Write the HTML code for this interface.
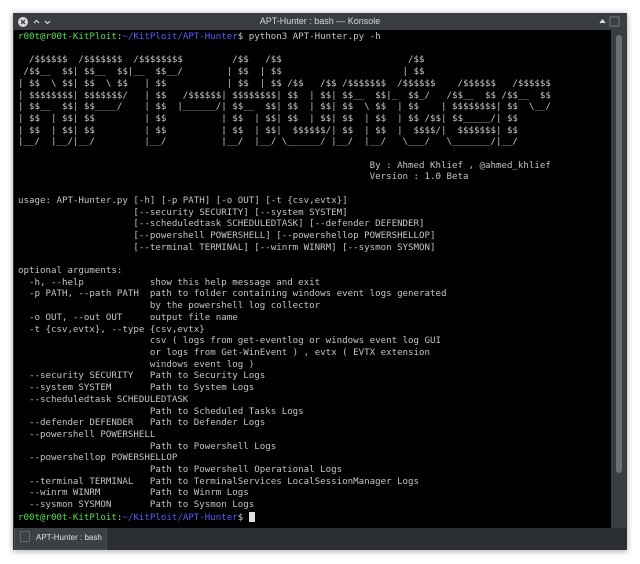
<!DOCTYPE html>
<html><head><meta charset="utf-8"><style>
html,body{margin:0;padding:0;background:#fff;width:640px;height:564px;overflow:hidden}
.win{position:absolute;left:13px;top:13px;width:614px;height:537px;background:#31363b;box-shadow:0 1px 6px rgba(0,0,0,.35)}
.title{position:absolute;left:0;top:0;width:614px;height:17px;background:#3a3e42;color:#d8d8d8;font:9px "Liberation Sans",sans-serif;text-align:center;line-height:17px}
.term{position:absolute;left:1px;top:17px;width:597px;height:498px;background:#000}
.sb{position:absolute;left:598px;top:17px;width:15px;height:498px;background:#3a3e42}
.thumb{position:absolute;left:603px;top:22px;width:6px;height:438px;background:#6d7175;border-radius:3px}
pre{position:absolute;left:4px;top:2px;margin:0;font:9.15px/11.7px "DejaVu Sans Mono","Liberation Mono",monospace;color:#c4c4c4}
.g{color:#4fe04f}.b{color:#5a5aff}
.tabbar{position:absolute;left:0;top:515px;width:614px;height:22px;background:#2b2f33}
.tab{position:absolute;left:1px;top:0;width:91px;height:21px;background:#3b4045;border:1px solid #4a4f54;border-top:none;color:#e0e0e0;font:8px "Liberation Sans",sans-serif;line-height:20px}
.cur{display:inline-block;width:6px;height:10px;background:#e0e0e0;vertical-align:-2px}
</style></head><body>
<div class="win">
<div class="title">APT-Hunter : bash — Konsole
<svg style="position:absolute;left:4px;top:3px" width="40" height="12"><circle cx="6" cy="6" r="5" fill="#ddd"/><path d="M4 4l4 4M8 4l-4 4" stroke="#3a3e42" stroke-width="1.3"/><path d="M17 7l2.5-2.5 2.5 2.5M28 5l2.5 2.5 2.5-2.5" stroke="#ddd" stroke-width="1.2" fill="none"/></svg>
<svg style="position:absolute;left:584px;top:3px" width="26" height="12"><path d="M3 7l2.5-3 2.5 3" stroke="#ddd" stroke-width="1.3" fill="#ddd"/><rect x="13" y="1" width="9" height="9" fill="none" stroke="#777"/></svg>
</div>
<div class="term"><pre><span class="g">r00t@r00t-KitPloit</span>:<span class="b">~/KitPloit/APT-Hunter</span>$ python3 APT-Hunter.py -h

  /$$$$$$  /$$$$$$$  /$$$$$$$$         /$$   /$$                       /$$
 /$$__  $$| $$__  $$|__  $$__/        | $$  | $$                      | $$
| $$  \ $$| $$  \ $$   | $$           | $$  | $$ /$$   /$$ /$$$$$$$  /$$$$$$    /$$$$$$   /$$$$$$
| $$$$$$$$| $$$$$$$/   | $$   /$$$$$$| $$$$$$$$| $$  | $$| $$__  $$|_  $$_/   /$$__  $$ /$$__  $$
| $$__  $$| $$____/    | $$  |______/| $$__  $$| $$  | $$| $$  \ $$  | $$    | $$$$$$$$| $$  \__/
| $$  | $$| $$         | $$          | $$  | $$| $$  | $$| $$  | $$  | $$ /$$| $$_____/| $$
| $$  | $$| $$         | $$          | $$  | $$|  $$$$$$/| $$  | $$  |  $$$$/|  $$$$$$$| $$
|__/  |__/|__/         |__/          |__/  |__/ \______/ |__/  |__/   \___/   \_______/|__/

                                                                By : Ahmed Khlief , @ahmed_khlief
                                                                Version : 1.0 Beta

usage: APT-Hunter.py [-h] [-p PATH] [-o OUT] [-t {csv,evtx}]
                     [--security SECURITY] [--system SYSTEM]
                     [--scheduledtask SCHEDULEDTASK] [--defender DEFENDER]
                     [--powershell POWERSHELL] [--powershellop POWERSHELLOP]
                     [--terminal TERMINAL] [--winrm WINRM] [--sysmon SYSMON]

optional arguments:
  -h, --help            show this help message and exit
  -p PATH, --path PATH  path to folder containing windows event logs generated
                        by the powershell log collector
  -o OUT, --out OUT     output file name
  -t {csv,evtx}, --type {csv,evtx}
                        csv ( logs from get-eventlog or windows event log GUI
                        or logs from Get-WinEvent ) , evtx ( EVTX extension
                        windows event log )
  --security SECURITY   Path to Security Logs
  --system SYSTEM       Path to System Logs
  --scheduledtask SCHEDULEDTASK
                        Path to Scheduled Tasks Logs
  --defender DEFENDER   Path to Defender Logs
  --powershell POWERSHELL
                        Path to Powershell Logs
  --powershellop POWERSHELLOP
                        Path to Powershell Operational Logs
  --terminal TERMINAL   Path to TerminalServices LocalSessionManager Logs
  --winrm WINRM         Path to Winrm Logs
  --sysmon SYSMON       Path to Sysmon Logs
<span class="g">r00t@r00t-KitPloit</span>:<span class="b">~/KitPloit/APT-Hunter</span>$ <span class="cur"></span></pre></div>
<div class="sb"></div><div class="thumb"></div>
<div class="tabbar"><div class="tab"><span style="display:inline-block;width:8px;height:9px;border:1px solid #666;margin:0 6px 0 5px;vertical-align:-2px"></span>APT-Hunter : bash</div></div>
</div>
</body></html>
